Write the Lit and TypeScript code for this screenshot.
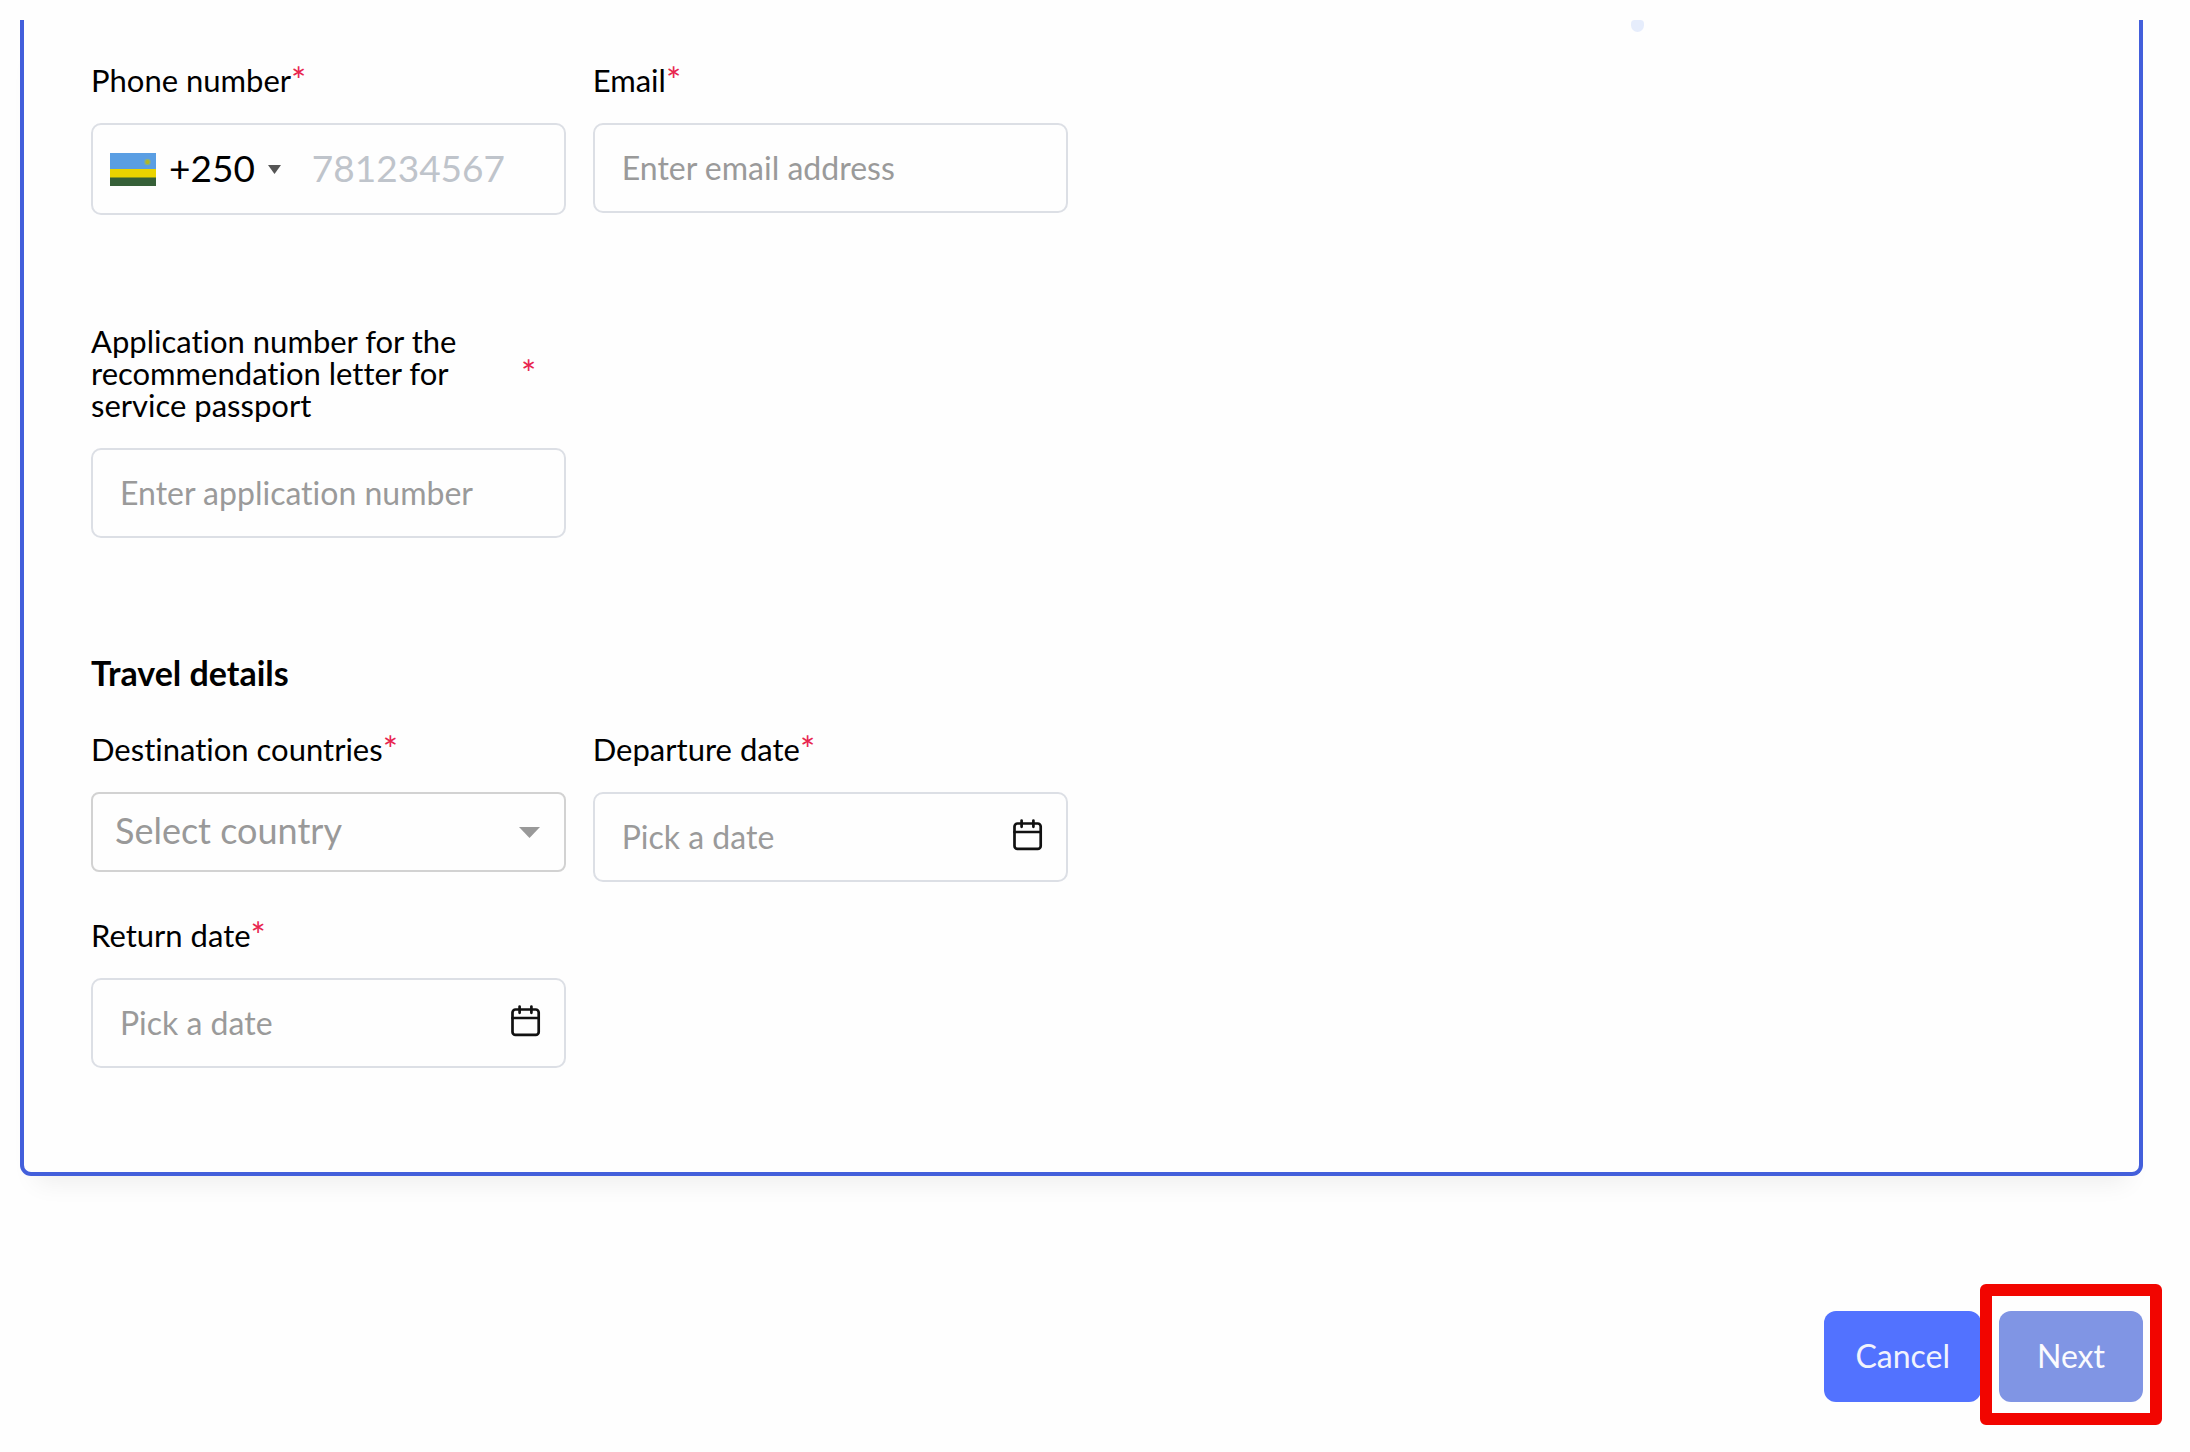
import { LitElement, html, svg, css } from "lit";
import { customElement, property } from "lit/decorators.js";

const calendarIcon = svg`<svg width="30" height="36" viewBox="0 0 30 36" fill="none" stroke="#111" stroke-width="2.7" stroke-linecap="round" aria-hidden="true">
  <rect x="1.5" y="4.5" width="26.2" height="25.4" rx="3"></rect>
  <path d="M8.6 1.6v6.2M20.4 1.6v6.2M1.5 13h26.2"></path>
</svg>`;

const rwandaFlag = svg`<svg width="46" height="33" viewBox="0 0 46 33" aria-hidden="true">
  <rect width="46" height="17" fill="#5a9ee3"></rect>
  <rect y="16" width="46" height="9" fill="#ead400"></rect>
  <rect y="24" width="46" height="9" fill="#366038"></rect>
  <rect y="24" width="46" height="1" fill="#8c9a1c"></rect>
  <circle cx="37.5" cy="9" r="3.2" fill="#88b084"></circle>
  <circle cx="37.5" cy="9" r="2" fill="#b3b81f"></circle>
</svg>`;

@customElement("form-field")
class FormField extends LitElement {
  @property() label = "";
  @property() kind: "text" | "email" | "phone" | "select" | "date" = "text";
  @property() placeholder = "";

  static styles = css`
    :host {
      display: block;
      min-width: 0;
    }
    .field {
      display: flex;
      flex-direction: column;
      gap: 27px;
    }
    .caption {
      display: flex;
      align-items: center;
      font-size: 31px;
      line-height: 32px;
      color: #000;
    }
    .caption label {
      max-width: 430px;
    }
    .star {
      font-size: 36px;
      color: #e8254f;
    }
    .box {
      display: flex;
      align-items: center;
      box-sizing: border-box;
      height: 90px;
      border: 2px solid #dcdfe5;
      border-radius: 10px;
      background: #fefefe;
    }
    .phone {
      height: 92px;
      padding-left: 17px;
    }
    input,
    select,
    button {
      font: inherit;
      border: 0;
      margin: 0;
      padding: 0;
      background: none;
      outline: none;
      min-width: 0;
    }
    input {
      flex: 1;
      width: 100%;
      height: 100%;
      box-sizing: border-box;
      font-size: 32px;
      padding: 0 0 2px 27px;
      color: #000;
    }
    input::placeholder {
      color: #9a9a9a;
      opacity: 1;
    }
    .country {
      display: flex;
      align-items: center;
      gap: 13px;
      font-size: 37px;
      color: #000;
    }
    .code {
      padding-bottom: 4px;
    }
    .phone input {
      font-size: 37px;
      padding: 0 0 4px 31px;
    }
    .phone input::placeholder {
      color: #bfc4cb;
    }
    .calendar {
      display: flex;
      padding-right: 23px;
    }
    .select {
      display: grid;
      height: 80px;
      border-color: #d2d2d2;
      border-radius: 8px;
    }
    .select > * {
      grid-area: 1 / 1;
    }
    select {
      appearance: none;
      width: 100%;
      height: 76px;
      padding: 0 0 4px 22px;
      font-size: 36px;
      color: #999;
    }
    .arrow {
      justify-self: end;
      margin-right: 24px;
      pointer-events: none;
    }
  `;

  private control() {
    switch (this.kind) {
      case "phone":
        return html`<div class="box phone">
          <button class="country" type="button">
            ${rwandaFlag}<span class="code">+250</span>
            <svg width="13" height="9" viewBox="0 0 13 9" aria-hidden="true"><path d="M0 0h13L6.500 9z" fill="#555"></path></svg>
          </button>
          <input id="control" type="tel" placeholder=${this.placeholder} required />
        </div>`;
      case "select":
        return html`<div class="box select">
          <select id="control" required>
            <option value="">${this.placeholder}</option>
          </select>
          <svg class="arrow" width="21" height="11" viewBox="0 0 21 11" aria-hidden="true"><path d="M0 0h21L10.500 11z" fill="#999"></path></svg>
        </div>`;
      case "date":
        return html`<div class="box">
          <input id="control" type="text" placeholder=${this.placeholder} required />
          <button class="calendar" type="button" aria-label=${this.label}>${calendarIcon}</button>
        </div>`;
      default:
        return html`<div class="box">
          <input id="control" type=${this.kind} placeholder=${this.placeholder} required />
        </div>`;
    }
  }

  render() {
    return html`<div class="field">
      <div class="caption"><label for="control">${this.label}</label><span class="star">*</span></div>
      ${this.control()}
    </div>`;
  }
}

@customElement("app-root")
class AppRoot extends LitElement {
  static styles = css`
    :host {
      display: block;
      box-sizing: border-box;
      min-height: 100vh;
      padding: 20px 47px 49px 20px;
      background: #fefefe;
      font-family: Lato, "Open Sans", "Noto Sans", sans-serif;
      font-variant-ligatures: none;
    }
    .card {
      position: relative;
      display: flex;
      flex-direction: column;
      padding: 44px 68px 104px 67px;
      border: 4px solid #435fdb;
      border-top: 0;
      border-radius: 0 0 11px 11px;
      background: #fefefe;
      box-shadow: 0 22px 24px -16px rgba(0, 0, 0, 0.07);
    }
    .dot {
      position: absolute;
      top: 0;
      left: 76%;
      width: 13px;
      height: 12px;
      border-radius: 4px 4px 7px 7px;
      background: #e6edfc;
    }
    .grid {
      display: grid;
      grid-template-columns: repeat(4, 1fr);
      align-items: start;
      gap: 37px 27px;
    }
    .second {
      margin-top: 110px;
    }
    .travel {
      margin-top: 119px;
    }
    .travel form-field:nth-child(3) {
      grid-column: 1;
    }
    h2 {
      margin: 0 0 44px;
      font-size: 34px;
      line-height: 32px;
      font-weight: 700;
      color: #000;
    }
    .actions {
      display: flex;
      justify-content: flex-end;
      gap: 18px;
      margin-top: 135px;
    }
    .action {
      height: 91px;
      border: 0;
      border-radius: 12px;
      font: inherit;
      font-size: 32px;
      color: #f1f3fc;
    }
    .cancel {
      padding: 0 31px 3px;
      background: #5272ff;
    }
    .next {
      padding: 0 38px 3px;
      background: #8095e4;
      color: #fbfbfe;
    }
    .marked {
      position: relative;
      display: flex;
    }
    .marker {
      position: absolute;
      inset: -27px -19px -23px;
      border: 12px solid #f20500;
      border-radius: 6px;
      pointer-events: none;
    }
    @media (max-width: 1500px) {
      .grid {
        grid-template-columns: repeat(2, 1fr);
      }
    }
  `;

  render() {
    return html`<form @submit=${(e: Event) => e.preventDefault()}>
      <div class="card">
        <span class="dot"></span>
        <div class="grid">
          <form-field label="Phone number" kind="phone" placeholder="781234567"></form-field>
          <form-field label="Email" kind="email" placeholder="Enter email address"></form-field>
        </div>
        <div class="grid second">
          <form-field
            label="Application number for the recommendation letter for service passport"
            placeholder="Enter application number"
          ></form-field>
        </div>
        <section class="travel">
          <h2>Travel details</h2>
          <div class="grid">
            <form-field label="Destination countries" kind="select" placeholder="Select country"></form-field>
            <form-field label="Departure date" kind="date" placeholder="Pick a date"></form-field>
            <form-field label="Return date" kind="date" placeholder="Pick a date"></form-field>
          </div>
        </section>
      </div>
      <div class="actions">
        <button class="action cancel" type="button">Cancel</button>
        <div class="marked">
          <button class="action next" type="submit">Next</button>
          <span class="marker"></span>
        </div>
      </div>
    </form>`;
  }
}
